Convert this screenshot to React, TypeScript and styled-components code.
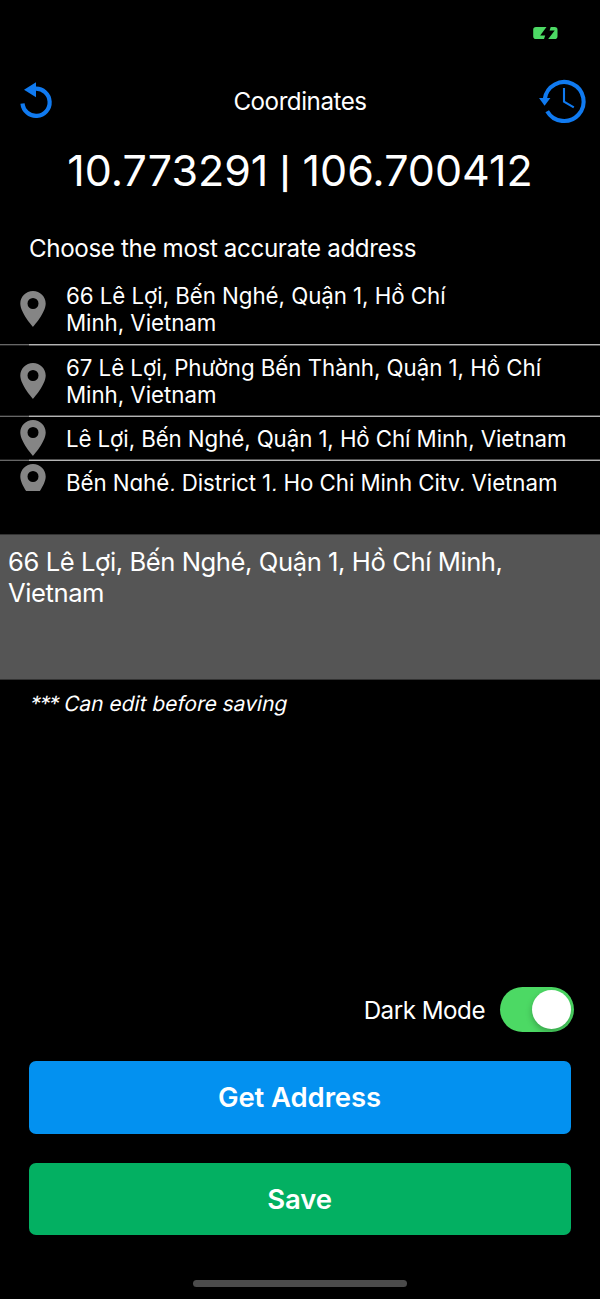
import React from "react";
import styled, { createGlobalStyle } from "styled-components";

const GlobalStyle = createGlobalStyle`
  * { box-sizing: border-box; }
  body { margin: 0; background: #000; color: #fff; font-family: Inter, "Noto Sans", sans-serif; }
`;

const Screen = styled.main`
  width: 600px;
  height: 1299px;
  background: #000;
  display: flex;
  flex-direction: column;
  overflow: hidden;
  white-space: nowrap;
`;

const StatusBar = styled.div`
  height: 70px;
  flex: none;
  display: flex;
  justify-content: flex-end;
  padding: 26px 42px 0 0;
`;

const NavBar = styled.header`
  height: 62px;
  flex: none;
  display: grid;
  grid-template-columns: 60px 1fr 60px;
`;

const IconButton = styled.button`
  padding: 0;
  border: 0;
  background: none;
  height: 62px;
  svg { display: block; }
`;

const Title = styled.h1`
  margin: 0;
  padding-top: 1px;
  font-size: 24.2px;
  font-weight: 400;
  line-height: 62px;
  letter-spacing: -0.48px;
  text-align: center;
`;

const Coordinates = styled.div`
  height: 76px;
  flex: none;
  font-size: 43px;
  line-height: 76px;
  text-align: center;
`;

const Bar = styled.span`
  display: inline-block;
  width: 11px;
  margin-left: -1px;
  font-size: 31px;
  font-weight: 600;
  line-height: 40px;
  vertical-align: 1px;
`;

const Prompt = styled.h2`
  margin: 0;
  height: 65px;
  flex: none;
  padding: 20px 0 0 29px;
  font-size: 24.2px;
  font-weight: 400;
  line-height: 41px;
  letter-spacing: -0.38px;
`;

const AddressList = styled.ul`
  margin: 0;
  padding: 0;
  height: 218px;
  flex: none;
  overflow: hidden;
  list-style: none;
`;

const AddressItem = styled.li<{ $height: number }>`
  height: ${(p) => p.$height}px;
  display: flex;
  align-items: center;
  padding: 1px 0 0 20px;
  svg { flex: none; margin: -1px 20px 0 0; }
`;

const AddressText = styled.span<{ $tracking: number }>`
  font-size: 22.3px;
  line-height: 27.5px;
  letter-spacing: ${(p) => p.$tracking}px;
`;

const Divider = styled.div<{ $brightTop?: boolean }>`
  height: 2px;
  display: flex;
  flex-direction: ${(p) => (p.$brightTop ? "column" : "column-reverse")};
  &::before {
    content: "";
    height: 1px;
    background: linear-gradient(to right, #666 29px, #b4b4b4 29px);
  }
  &::after {
    content: "";
    height: 1px;
    background: linear-gradient(to right, #222 29px, #505050 29px);
  }
`;

const Editor = styled.div`
  height: 146px;
  flex: none;
  margin-top: 43px;
  padding: 11px 8px;
  border: solid #333;
  border-width: 1px 0;
  background: #555;
  font-size: 25.6px;
  line-height: 31px;
  letter-spacing: -0.42px;
`;

const Hint = styled.p`
  margin: 0;
  padding: 9px 0 0 31.5px;
  font-size: 21px;
  line-height: 30px;
  letter-spacing: -0.02px;
  transform: skewX(-12deg);
`;

const Stars = styled.span`
  letter-spacing: -1.2px;
`;

const Footer = styled.footer`
  margin-top: auto;
  padding: 0 29px 12px;
  display: flex;
  flex-direction: column;
  gap: 29px;
`;

const ModeRow = styled.div`
  display: flex;
  align-items: center;
  justify-content: flex-end;
  gap: 15px;
  margin-right: -3px;
`;

const ModeLabel = styled.span`
  padding-top: 2px;
  font-size: 24.2px;
  letter-spacing: -0.5px;
`;

const Toggle = styled.div`
  width: 74px;
  height: 45px;
  padding: 3px;
  border-radius: 23px;
  background: #4cd964;
  display: flex;
  justify-content: flex-end;
`;

const Knob = styled.div`
  width: 39px;
  height: 39px;
  border-radius: 50%;
  background: #fff;
  box-shadow: 0 3px 6px rgba(0, 0, 0, 0.25);
`;

const ActionButton = styled.button<{ $color: string; $line: number }>`
  height: 72.3px;
  padding: 0 1px 0 0;
  border: 0;
  border-radius: 7px;
  background: ${(p) => p.$color};
  color: #fff;
  font: 600 27.5px/${(p) => p.$line}px Inter, sans-serif;
  letter-spacing: -0.1px;
`;

const HomeIndicator = styled.div`
  width: 214px;
  height: 7px;
  margin: 16px auto 0;
  border-radius: 4px;
  background: #4b4b4b;
`;

const BatteryIcon = () => (
  <svg width="25" height="14" viewBox="0 0 25 14">
    <path fill="#4cd964" d="M3 1H13.5L7.2 9.4H12.2L11 13H3Q.2 13 .2 10.2V3.8Q.2 1 3 1Z" />
    <path fill="#4cd964" d="M17.7 1H21.7Q24.5 1 24.5 3.8V10.2Q24.5 13 21.7 13H15.2L21.7 4.4H16.6Z" />
  </svg>
);

const ResetIcon = () => (
  <svg width="60" height="62" viewBox="0 70 60 62">
    <path d="M35.5 88.7A13.6 13.6 0 1 1 22.5 103.5" fill="none" stroke="#107af0" strokeWidth="4.2" />
    <path d="M24 89.8L36 82.2V97.2Z" fill="#107af0" />
  </svg>
);

const HistoryIcon = () => (
  <svg width="60" height="62" viewBox="540 70 60 62" overflow="visible">
    <path d="M544.8 99A19.5 19.5 0 1 1 547.2 111.2" fill="none" stroke="#107af0" strokeWidth="4.1" />
    <path d="M539 98H550.4L544.6 105.8Z" fill="#107af0" />
    <path d="M564 88V101.7L573.8 107.4" fill="none" stroke="#107af0" strokeWidth="2.1" />
  </svg>
);

const PinIcon = () => (
  <svg width="26" height="36" viewBox="0 0 26 36">
    <path
      fill="#858585"
      fillRule="evenodd"
      d="M13 0C5.9 0 .3 5.6 .3 12.6C.3 22 13 36 13 36S25.7 22 25.7 12.6C25.7 5.6 20.1 0 13 0ZM13 7A5.5 5.5 0 1 1 13 18A5.5 5.5 0 1 1 13 7Z"
    />
  </svg>
);

const addresses = [
  { lines: ["66 Lê Lợi, Bến Nghé, Quận 1, Hồ Chí", "Minh, Vietnam"], tracking: -0.05, height: 71 },
  { lines: ["67 Lê Lợi, Phường Bến Thành, Quận 1, Hồ Chí", "Minh, Vietnam"], tracking: -0.04, height: 69 },
  { lines: ["Lê Lợi, Bến Nghé, Quận 1, Hồ Chí Minh, Vietnam"], tracking: -0.09, height: 42 },
  { lines: ["Bến Nghé, District 1, Ho Chi Minh City, Vietnam"], tracking: -0.07, height: 42 },
];

export default function App() {
  return (
    <>
      <GlobalStyle />
      <Screen>
        <StatusBar><BatteryIcon /></StatusBar>
        <NavBar>
          <IconButton aria-label="Reset"><ResetIcon /></IconButton>
          <Title>Coordinates</Title>
          <IconButton aria-label="History"><HistoryIcon /></IconButton>
        </NavBar>
        <Coordinates>10.773291 <Bar>|</Bar> 106.700412</Coordinates>
        <Prompt>Choose the most accurate address</Prompt>
        <AddressList>
          {addresses.map((a, index) => (
            <React.Fragment key={a.lines.join(" ")}>
              <AddressItem $height={a.height}>
                <PinIcon />
                <AddressText $tracking={a.tracking}>
                  {a.lines.map((line, i) => (
                    <React.Fragment key={line}>{i > 0 && <br />}{line}</React.Fragment>
                  ))}
                </AddressText>
              </AddressItem>
              <Divider $brightTop={index === 0} />
            </React.Fragment>
          ))}
        </AddressList>
        <Editor>66 Lê Lợi, Bến Nghé, Quận 1, Hồ Chí Minh,<br />Vietnam</Editor>
        <Hint><Stars>***</Stars> Can edit before saving</Hint>
        <Footer>
          <ModeRow>
            <ModeLabel>Dark Mode</ModeLabel>
            <Toggle role="switch" aria-checked="true"><Knob /></Toggle>
          </ModeRow>
          <ActionButton $color="#0391f0" $line={71}>Get Address</ActionButton>
          <ActionButton $color="#03b062" $line={72.3}>Save</ActionButton>
          <HomeIndicator />
        </Footer>
      </Screen>
    </>
  );
}
